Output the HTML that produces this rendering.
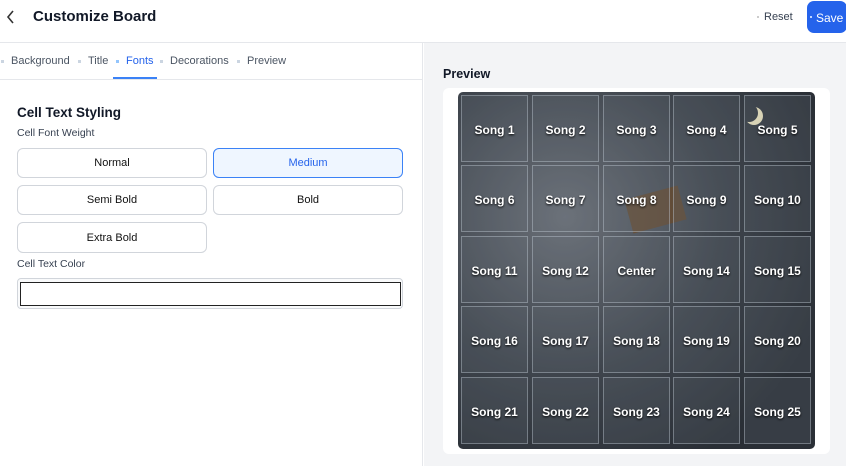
<!DOCTYPE html>
<html><head><style>
*{box-sizing:border-box;margin:0;padding:0}
body{width:846px;height:466px;font-family:"Liberation Sans","DejaVu Sans",sans-serif;background:#fff;position:relative;overflow:hidden;color:#111827}
.hdr{position:absolute;left:0;top:0;width:846px;height:43px;border-bottom:1px solid #e5e7eb;background:#fff}
.abs{position:absolute}
.left{position:absolute;left:0;top:43px;width:423px;height:423px;border-right:1px solid #e5e7eb;background:#fff}
.right{position:absolute;left:424px;top:43px;width:422px;height:423px;background:#f3f4f6}
.tab{position:absolute;top:55px;font-size:11px;color:#4b5563}
.dot{position:absolute;top:60px;width:3px;height:3px;background:#cbd5e1}
.btn{position:absolute;border:1px solid #d1d5db;border-radius:6px;background:#fff;font-size:11px;display:flex;align-items:center;justify-content:center;color:#111}
.board{position:absolute;left:458px;top:92px;width:357px;height:357px;border-radius:5px;background:radial-gradient(circle at 30% 35%,#6b7078,#3f454d 45%,#2a2f36 80%),#333;overflow:hidden}
.cell{position:absolute;width:67px;height:67px;border:1px solid rgba(200,210,220,.4);background:rgba(110,118,128,.2);color:#fff;font-size:12px;font-weight:bold;display:flex;align-items:center;justify-content:center;padding-top:3px;text-shadow:0 1px 2px #000}
</style></head><body>
<div class="hdr">
<svg class="abs" style="left:6px;top:10px" width="10" height="14" viewBox="0 0 10 14"><path d="M7 1L2 7l5 6" stroke="#333" stroke-width="1.6" fill="none"/></svg>
<div class="abs" style="left:33px;top:8px;font-size:15px;font-weight:bold">Customize Board</div>
<div class="abs" style="left:757px;top:16px;width:2px;height:2px;background:#ccc"></div>
<div class="abs" style="left:764px;top:11px;font-size:11px;color:#374151">Reset</div>
<div class="abs" style="left:807px;top:1px;width:40px;height:32px;background:#2563eb;border-radius:7px;color:#fff;font-size:12px;padding:10px 0 0 9px">Save</div>
<div class="abs" style="left:810px;top:16px;width:2px;height:2px;background:#bfd4ff"></div>
</div>
<div class="left">
<div class="abs" style="left:0;top:36px;width:423px;height:1px;background:#e5e7eb"></div>
</div>
<div class="dot" style="left:1px"></div><div class="tab" style="left:11px">Background</div>
<div class="dot" style="left:78px"></div><div class="tab" style="left:88px">Title</div>
<div class="dot" style="left:116px;background:#93c5fd"></div><div class="tab" style="left:126px;color:#2563eb">Fonts</div>
<div class="abs" style="left:113px;top:77px;width:44px;height:2px;background:#3b82f6"></div>
<div class="dot" style="left:160px"></div><div class="tab" style="left:170px">Decorations</div>
<div class="dot" style="left:237px"></div><div class="tab" style="left:247px">Preview</div>
<div class="abs" style="left:17px;top:105px;font-size:13.5px;font-weight:bold">Cell Text Styling</div>
<div class="abs" style="left:17px;top:127px;font-size:10.5px;color:#374151">Cell Font Weight</div>
<div class="btn" style="left:17px;top:148px;width:190px;height:30px">Normal</div>
<div class="btn" style="left:213px;top:148px;width:190px;height:30px;border-color:#3b82f6;background:#eff6ff;color:#2563eb">Medium</div>
<div class="btn" style="left:17px;top:185px;width:190px;height:30px">Semi Bold</div>
<div class="btn" style="left:213px;top:185px;width:190px;height:30px">Bold</div>
<div class="btn" style="left:17px;top:222px;width:190px;height:31px">Extra Bold</div>
<div class="abs" style="left:17px;top:258px;font-size:10.5px;color:#374151">Cell Text Color</div>
<div class="abs" style="left:17px;top:278px;width:386px;height:31px;border:1px solid #d1d5db;border-radius:4px;background:#f9fafb"></div>
<div class="abs" style="left:20px;top:282px;width:381px;height:24px;border:1px solid #222;background:#fff"></div>
<div class="right"></div>
<div class="abs" style="left:443px;top:67px;font-size:12.5px;font-weight:bold">Preview</div>
<div class="abs" style="left:443px;top:88px;width:387px;height:366px;background:#fff;border-radius:6px"></div>
<div class="board">
<div class="abs" style="left:282px;top:12px;width:18px;height:18px;border-radius:50%;box-shadow:5px 3px 0 0 #f3eac4"></div>
<div class="abs" style="left:170px;top:100px;width:55px;height:35px;background:#6b4a2a;transform:rotate(-15deg);opacity:.7"></div>
</div>
<div id="g"></div>
<script>
var xs=[461,532,603,673,744],ys=[95,165,236,306,377],h='';
for(var r=0;r<5;r++)for(var c=0;c<5;c++){var n=r*5+c+1;var t=n==13?'Center':'Song '+n;h+='<div class="cell" style="left:'+xs[c]+'px;top:'+ys[r]+'px">'+t+'</div>';}
document.getElementById('g').innerHTML=h;
</script>
</body></html>
